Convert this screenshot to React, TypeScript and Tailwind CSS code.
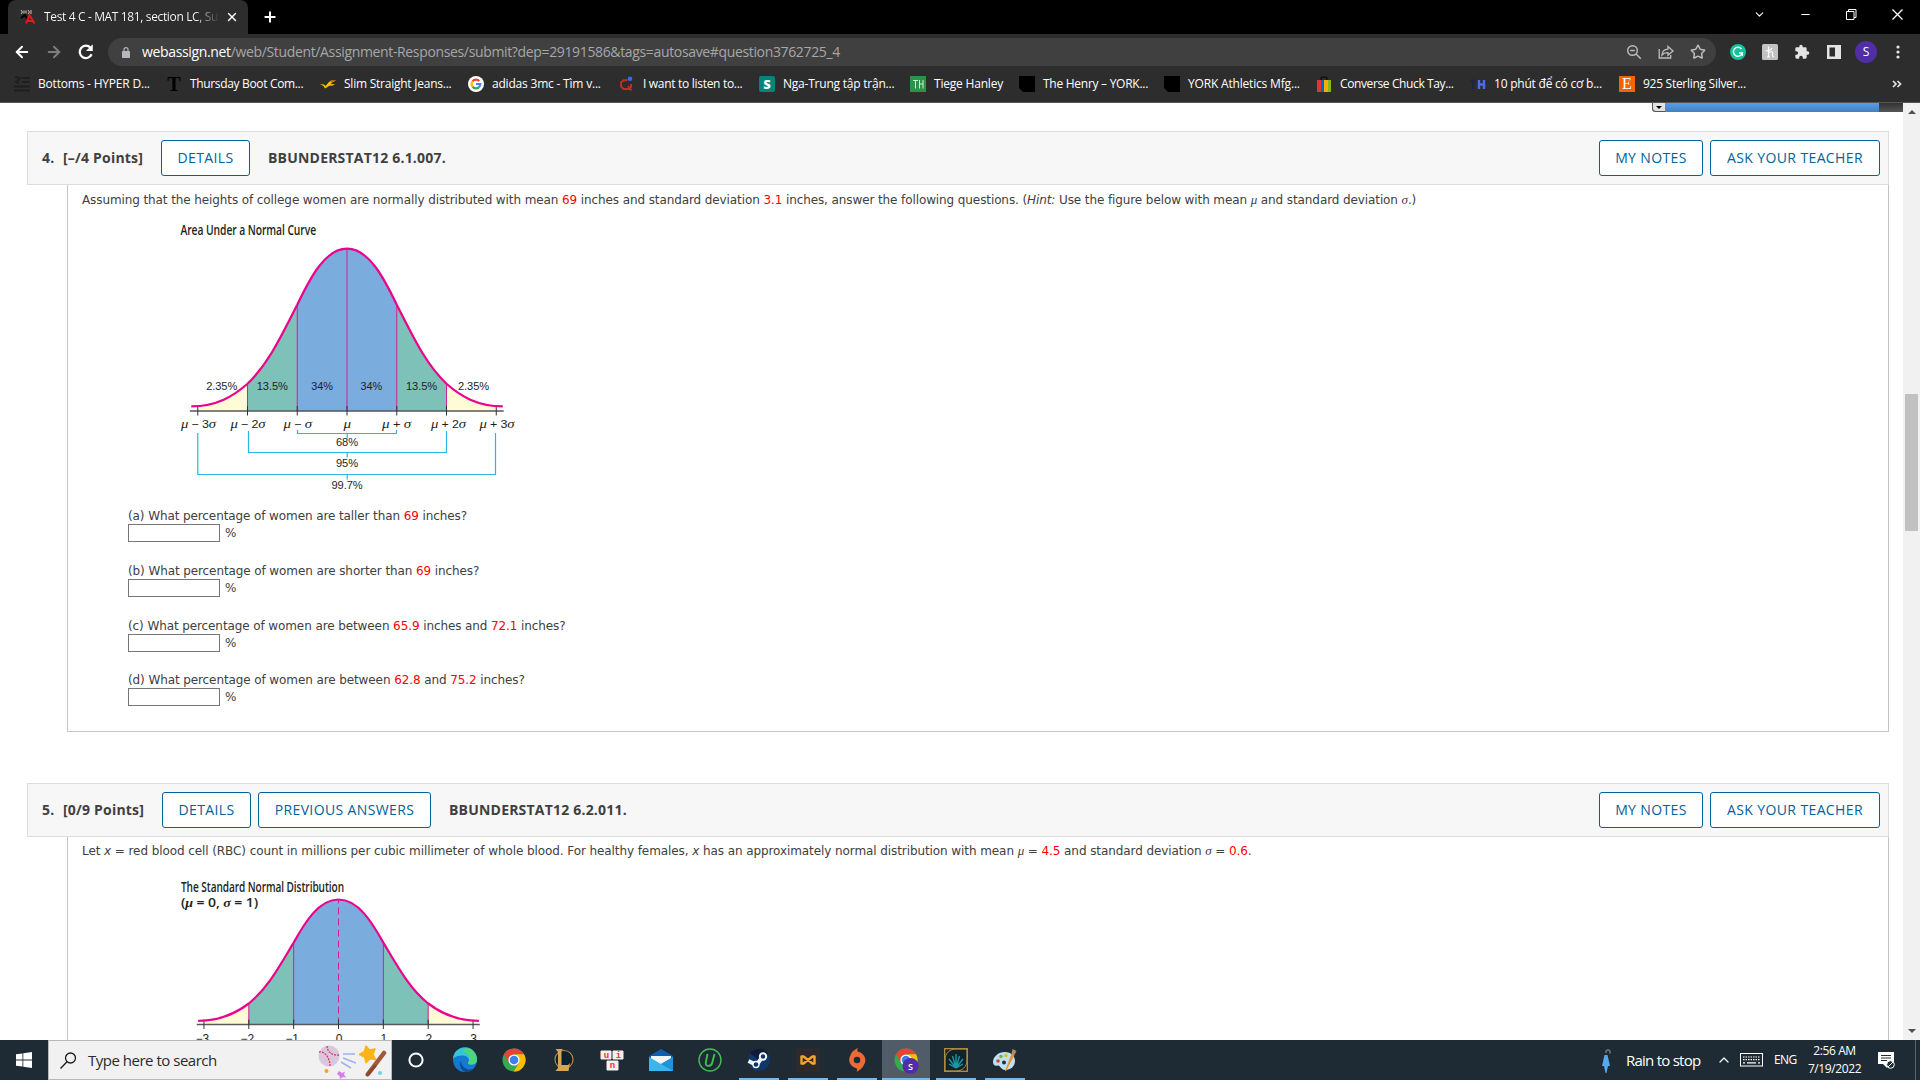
import React from 'react';
import { clsx } from 'clsx';
import { ArrowLeft, ArrowRight, ChevronDown, ChevronUp, Minus, Plus, Star, X } from 'lucide-react';

const UI = "font-['Open_Sans',sans-serif]";

function FavText({ children, className }: { children: React.ReactNode; className: string }) {
  return (
    <span className={clsx('flex h-4 w-4 shrink-0 items-center justify-center leading-none', className)}>
      {children}
    </span>
  );
}

function GoogleG() {
  return (
    <svg viewBox="0 0 16 16" className="h-4 w-4 shrink-0">
      <circle cx="8" cy="8" r="8" fill="#fff" />
      <g fill="none" strokeWidth="2.2">
        <path d="M4.6 5.3A4.3 4.3 0 0 1 11.2 5" stroke="#ea4335" />
        <path d="M4.6 10.7A4.4 4.4 0 0 1 4.6 5.3" stroke="#fbbc05" />
        <path d="M11 11.1A4.3 4.3 0 0 1 4.6 10.7" stroke="#34a853" />
        <path d="M8 8h4.3A4.3 4.3 0 0 1 11 11.1" stroke="#4285f4" />
      </g>
    </svg>
  );
}

const BOOKMARKS = [
  {
    label: 'Bottoms - HYPER D...',
    box: 'w-[152px]',
    track: 'tracking-[-0.2px]',
    icon: (
      <svg viewBox="0 0 16 16" className="h-4 w-4 shrink-0" fill="none" stroke="#1f1f1f" strokeWidth="2">
        <path d="M1 1l5 1-4 4 3 1M8 2h8M8 6h8M0 10.500h16M0 14.500h16" />
      </svg>
    ),
  },
  {
    label: 'Thursday Boot Com...',
    box: 'w-[154px]',
    track: 'tracking-[-0.34px]',
    icon: <FavText className="font-['Liberation_Serif',serif] text-[20px] font-bold text-black">T</FavText>,
  },
  {
    label: 'Slim Straight Jeans...',
    box: 'w-[148px]',
    track: 'tracking-[-0.24px]',
    icon: (
      <svg viewBox="0 0 16 16" className="h-4 w-4 shrink-0">
        <path d="M0 8l4 .5 1.500 1.500L9 6l2-1.500h5L12 6.500 11 8h4l-3 2H9L5 12.500 3.500 10z" fill="#f2c500" />
        <path d="M10 5.500l6-1.500-4 2.500zM9 9l5-.5-3 1.500z" fill="#e5531a" />
      </svg>
    ),
  },
  { label: 'adidas 3mc - Tìm v...', box: 'w-[151px]', track: 'tracking-[-0.2px]', icon: <GoogleG /> },
  {
    label: 'I want to listen to...',
    box: 'w-[140px]',
    track: 'tracking-[-0.3px]',
    icon: (
      <svg viewBox="0 0 16 16" className="h-4 w-4 shrink-0" fill="none">
        <path d="M8.500 4.200H4.500L2 6.500v4L4.500 13H10l2-2V8M9 10l3.500 4.500" stroke="#c32a2a" strokeWidth="2" />
        <circle cx="11" cy="2.800" r="2.300" fill="#2f6bff" />
      </svg>
    ),
  },
  {
    label: 'Nga-Trung tập trận...',
    box: 'w-[151px]',
    track: 'tracking-[-0.22px]',
    icon: <FavText className="rounded-[2px] bg-[#00857a] text-[13px] font-extrabold text-white">S</FavText>,
  },
  {
    label: 'Tiege Hanley',
    box: 'w-[109px]',
    track: 'tracking-[-0.2px]',
    icon: (
      <svg viewBox="0 0 16 16" className="h-4 w-4 shrink-0">
        <rect width="16" height="16" fill="#2b9348" />
        <path d="M3 4.500h5M5.500 4.500v8M9.500 4v8.500M13 4v8.500M9.500 8H13" stroke="#c8efcf" fill="none" />
      </svg>
    ),
  },
  {
    label: 'The Henry – YORK...',
    box: 'w-[145px]',
    track: 'tracking-[-0.27px]',
    icon: (
      <svg viewBox="0 0 16 16" className="h-4 w-4 shrink-0">
        <path d="M0 0h16v16H4l-4-4z" fill="#000" />
      </svg>
    ),
  },
  {
    label: 'YORK Athletics Mfg...',
    box: 'w-[152px]',
    track: 'tracking-[-0.18px]',
    icon: (
      <svg viewBox="0 0 16 16" className="h-4 w-4 shrink-0">
        <path d="M0 0h16v16H4l-4-4z" fill="#000" />
      </svg>
    ),
  },
  {
    label: 'Converse Chuck Tay...',
    box: 'w-[154px]',
    track: 'tracking-[-0.38px]',
    icon: (
      <svg viewBox="0 0 16 16" className="h-4 w-4 shrink-0">
        <path d="M5 4V2.500C5 .5 11 .5 11 2.500V4" fill="none" stroke="#111" strokeWidth="1.400" />
        <path d="M1 4h4v12H1z" fill="#e53238" />
        <path d="M5 4h3v12H5z" fill="#0064d2" />
        <path d="M8 4h4v12H8z" fill="#f5af02" />
        <path d="M12 4h3v12h-3z" fill="#86b817" />
      </svg>
    ),
  },
  {
    label: '10 phút để có cơ b...',
    box: 'w-[149px]',
    track: 'tracking-[-0.22px]',
    icon: (
      <svg viewBox="0 0 16 16" className="h-4 w-4 shrink-0" fill="none">
        <path d="M0 4.500h6M3 4.500V13" stroke="#1e2540" strokeWidth="2" />
        <path d="M9 4v9M14 4v9M9 8.500h5" stroke="#4a6cf0" strokeWidth="2.400" />
      </svg>
    ),
  },
  {
    label: '925 Sterling Silver...',
    box: 'w-[150px]',
    track: 'tracking-[-0.28px]',
    icon: <FavText className="bg-[#f56400] font-['Liberation_Serif',serif] text-[16px] text-white">E</FavText>,
  },
];

function TabStrip() {
  return (
    <div className="flex h-[34px] shrink-0 bg-black pl-2 text-white">
      <div className="relative flex w-60 items-center rounded-t-lg bg-[#2d2d2d] pl-3">
        <svg viewBox="0 0 16 16" className="mr-2 h-4 w-4 shrink-0" fill="none">
          <path d="M1 1l1.500 2L1 5M4 1.500v3M6 1.500v3M8 1l1.500 2L8 5M11 1v4" stroke="#c9c9c9" />
          <path d="M1 9l4-3 3 5" stroke="#000" strokeWidth="2" />
          <path d="M6 14.500l3.500-8.500 5 8.500M8 12h5" stroke="#e11b1b" strokeWidth="2" />
        </svg>
        <span className="w-[176px] overflow-hidden bg-gradient-to-r from-white from-85% to-transparent bg-clip-text text-xs tracking-[-0.36px] whitespace-nowrap text-transparent">
          Test 4 C - MAT 181, section LC, Su
        </span>
        <X className="ml-[5px] h-3.5 w-3.5 shrink-0" strokeWidth={2.4} />
      </div>
      <Plus className="mt-[9px] ml-3.5 h-4 w-4" strokeWidth={3} />
      <div className="ml-auto flex items-start gap-[33px] pt-2 pr-4">
        <ChevronDown className="h-[13px] w-[13px]" strokeWidth={2} />
        <Minus className="h-[13px] w-[13px]" strokeWidth={2} />
        <svg viewBox="0 0 13 13" className="h-[13px] w-[13px]" fill="none" stroke="#fff">
          <path d="M1.500 3.500h7.500v8H1.500zM3.500 3.500v-2h7.500v8H9" />
        </svg>
        <svg viewBox="0 0 13 13" className="h-[13px] w-[13px]" fill="none" stroke="#fff" strokeWidth="1.300">
          <path d="M1.500 1.500l10 10M11.500 1.500l-10 10" />
        </svg>
      </div>
    </div>
  );
}

function Toolbar() {
  return (
    <div className="flex h-8 shrink-0 items-center bg-[#2d2d2d] pt-1 pl-[13px]">
      <ArrowLeft className="h-[18px] w-[18px] text-white" strokeWidth={2.600} />
      <ArrowRight className="ml-3.5 h-[18px] w-[18px] text-[#7d7d7d]" strokeWidth={2.600} />
      <svg viewBox="0 0 16 16" className="ml-3.5 h-[18px] w-[18px] text-white" fill="none" stroke="currentColor">
        <path d="M13 10A5.500 5.500 0 1 1 12 4.200" strokeWidth="2" />
        <path d="M14 1v6H8z" fill="currentColor" stroke="none" />
      </svg>
      <div className="ml-[13px] flex h-7 w-[1608px] items-center rounded-full bg-[#404040] pl-3.5">
        <svg viewBox="0 0 10 14" className="mr-3 h-[13px] w-2" fill="none">
          <path d="M2.500 6V3.500a2.500 2.500 0 0 1 5 0V6" stroke="#b5b8bd" strokeWidth="1.500" />
          <rect y="5" width="10" height="9" rx="1" fill="#b5b8bd" />
        </svg>
        <span className="text-sm tracking-[-0.35px] whitespace-nowrap text-[#a5a7aa]">
          <span className="text-white">webassign.net</span>
          /web/Student/Assignment-Responses/submit?dep=29191586&amp;tags=autosave#question3762725_4
        </span>
        <div className="ml-auto flex items-center gap-4 pr-2.5">
          <svg viewBox="0 0 16 16" className="h-4 w-4" fill="none" stroke="#bdbdbd" strokeWidth="1.400">
            <circle cx="6.500" cy="6.500" r="4.800" />
            <path d="M10 10l4.800 4.800M4.200 6.500h4.600" />
          </svg>
          <svg viewBox="0 0 16 16" className="h-4 w-4" fill="none" stroke="#bdbdbd" strokeWidth="1.300">
            <path d="M1.200 5v9h11.500v-3" />
            <path d="M4 11c.3-4 2.500-5.800 6-5.900V2.500L15 7l-5 4.300V8.700C7.500 8.600 5.500 9.200 4 11z" />
          </svg>
          <Star className="h-4 w-4 text-[#bdbdbd]" strokeWidth={2.200} />
        </div>
      </div>
      <div className="ml-3.5 flex items-center gap-4">
        <svg viewBox="0 0 16 16" className="h-4 w-4">
          <circle cx="8" cy="8" r="8" fill="#15c39a" />
          <path d="M11.500 5A4.500 4.500 0 1 0 12.300 9H9M12.300 9v3" fill="none" stroke="#fff" strokeWidth="1.400" />
        </svg>
        <svg viewBox="0 0 16 16" className="h-4 w-4">
          <rect width="16" height="16" rx="1.500" fill="#c2c2c2" />
          <path d="M6.500 2.500v10M5 13h3M3.500 7C6 7 9 5.500 10 4M6.500 9c2-2 4-2 4 0v3l1.500 1" fill="none" stroke="#fff" strokeWidth="1.200" />
        </svg>
        <svg viewBox="0 0 24 24" className="h-[18px] w-4">
          <path d="M20.500 11H19V7a2 2 0 0 0-2-2h-4V3.500a2.500 2.500 0 0 0-5 0V5H4a2 2 0 0 0-2 2v3.800h1.500a2.700 2.700 0 0 1 0 5.400H2V20a2 2 0 0 0 2 2h3.800v-1.500a2.700 2.700 0 0 1 5.400 0V22H17a2 2 0 0 0 2-2v-4h1.500a2.500 2.500 0 0 0 0-5z" fill="#e4e4e4" />
        </svg>
        <svg viewBox="0 0 16 16" className="h-4 w-4">
          <path d="M1 1h14v14H1zM3.500 3.500v9H9v-9z" fill="#e4e4e4" fillRule="evenodd" />
        </svg>
        <span className="-mx-[3px] flex h-[22px] w-[22px] items-center justify-center rounded-full bg-[#512da8] text-xs text-white">
          S
        </span>
        <svg viewBox="0 0 16 16" className="h-4 w-4" fill="#e4e4e4">
          <circle cx="8" cy="3" r="1.600" />
          <circle cx="8" cy="8" r="1.600" />
          <circle cx="8" cy="13" r="1.600" />
        </svg>
      </div>
    </div>
  );
}

function BookmarkBar() {
  return (
    <div className="flex h-[37px] shrink-0 items-center border-b border-[#555] bg-[#2d2d2d] pl-3.5 text-xs text-white">
      {BOOKMARKS.map(b => (
        <div key={b.label} className={clsx('flex shrink-0 items-center gap-2', b.box)}>
          {b.icon}
          <span className={clsx('whitespace-nowrap', b.track)}>{b.label}</span>
        </div>
      ))}
      <svg viewBox="0 0 10 8" className="mr-[18px] ml-auto h-2 w-2.5" fill="none" stroke="#e4e4e4" strokeWidth="1.700">
        <path d="M1 1l3 3-3 3M5.500 1l3 3-3 3" />
      </svg>
    </div>
  );
}

function OutlineButton({ children, className }: { children: string; className: string }) {
  return (
    <button
      className={clsx(
        'h-9 shrink-0 rounded-[3px] border border-[#00629b] bg-white text-sm leading-none tracking-[0.38px] whitespace-nowrap text-[#00629b]',
        className
      )}
    >
      {children}
    </button>
  );
}

function QuestionHeader({ num, points, code, previous }: { num: string; points: string; code: string; previous?: boolean }) {
  return (
    <div className="flex h-[54px] shrink-0 items-center border border-[#ddd] bg-[#f7f7f7] pr-2 pl-[14px] text-sm font-bold tracking-[0.2px] whitespace-nowrap text-[#404040]">
      <span className="w-[21px]">{num}</span>
      <span className={previous ? 'w-[99px]' : 'w-[98px]'}>{points}</span>
      <OutlineButton className="w-[89px] font-normal">DETAILS</OutlineButton>
      {previous && <OutlineButton className="ml-[7px] w-[173px] font-normal">PREVIOUS ANSWERS</OutlineButton>}
      <span className="ml-[18px]">{code}</span>
      <OutlineButton className="ml-auto w-[104px] font-normal">MY NOTES</OutlineButton>
      <OutlineButton className="ml-[7px] w-[170px] font-normal">ASK YOUR TEACHER</OutlineButton>
    </div>
  );
}

function Num({ children }: { children: string }) {
  return <span className="text-[#f00]">{children}</span>;
}

function Sym({ children }: { children: string }) {
  return <i className="font-['Liberation_Serif',serif] text-[13px]">{children}</i>;
}

interface CurveProps {
  cx: number;
  sigma: number;
  axis: number;
  height: number;
  dashed?: boolean;
}

function Curve({ cx, sigma, axis, height, dashed }: CurveProps) {
  // p() maps (z, relative density) to drawing coordinates
  const p = (z: number, h: number) => `${(cx + z * sigma).toFixed(2)},${(axis - h * height).toFixed(2)}`;
  const tail = (s: number) => `C${p(s * 2.62, 0.029)} ${p(s * 2.28, 0.092)} ${p(s * 2, 0.168)}`;
  const side = (s: number) => `C${p(s * 1.58, 0.29)} ${p(s * 1.33, 0.458)} ${p(s, 0.655)}`;
  const whole = (s: number) =>
    `M${p(s * 3.13, 0.029)} ${tail(s)} ${side(s)} C${p(s * 0.744, 0.819)} ${p(s * 0.44, 1)} ${p(0, 1)}`;
  const top = (s: number) => `M${p(s, 0)} L${p(s, 0.655)} C${p(s * 0.744, 0.819)} ${p(s * 0.44, 1)} ${p(0, 1)} L${p(0, 0)}Z`;
  return (
    <g fill="none">
      {[-1, 1].map(s => (
        <g key={s}>
          <path d={`M${p(s * 3, 0)} L${p(s * 3, 0.029)} ${tail(s)} L${p(s * 2, 0)}Z`} fill="#fffbd6" />
          <path d={`M${p(s * 2, 0)} L${p(s * 2, 0.168)} ${side(s)} L${p(s, 0)}Z`} fill="#7dc1b9" />
          <path d={top(s)} fill="#7aacde" stroke="#7aacde" strokeWidth="0.5" />
        </g>
      ))}
      <path d={`M${p(-3.16, 0)} L${p(3.15, 0)}`} stroke="#58585a" strokeWidth="1.3" />
      {[-2, -1, 1, 2].map(z => (
        <path key={z} d={`M${p(z, 0)} L${p(z, Math.abs(z) === 1 ? 0.655 : 0.168)}`} stroke="#d0218f" />
      ))}
      <path d={`M${p(0, 0)} L${p(0, 1)}`} stroke="#d0218f" strokeDasharray={dashed ? '7 4' : undefined} />
      {[-3, -2, -1, 0, 1, 2, 3].map(z => (
        <path key={z} d={`M${p(z, 0)}m0-5v9.500`} stroke="#333" />
      ))}
      {[-1, 1].map(s => (
        <path key={s} d={whole(s)} stroke="#ec008c" strokeWidth="2.2" />
      ))}
    </g>
  );
}

const AREAS = [
  ['2.35%', 221.700, 31],
  ['13.5%', 272.300, 31],
  ['34%', 322, 21.500],
  ['34%', 371.300, 21.500],
  ['13.5%', 421.500, 31],
  ['2.35%', 473.500, 31],
] as const;

const AXIS_LABELS = [
  ['μ', ' − 3', 'σ', 181, 35],
  ['μ', ' − 2', 'σ', 230.500, 35],
  ['μ', ' − ', 'σ', 283.500, 28.500],
  ['μ', '', '', 343.500, 7.500],
  ['μ', ' + ', 'σ', 382, 29],
  ['μ', ' + 2', 'σ', 431, 35],
  ['μ', ' + 3', 'σ', 479.500, 35],
] as const;

function AreaChart() {
  return (
    <svg
      viewBox="180 218 340 276"
      className="h-[276px] w-[340px] font-['Liberation_Sans',sans-serif] text-[11px]"
      fill="#231f20"
    >
      <text x="180.5" y="234.500" textLength="135.500" lengthAdjust="spacingAndGlyphs" className="font-['Open_Sans',sans-serif] text-[13.500px] font-semibold">
        Area Under a Normal Curve
      </text>
      <Curve cx={347} sigma={49.750} axis={411} height={162.300} />
      {AREAS.map(([label, x, w]) => (
        <text key={x} x={x} y="390" textAnchor="middle" textLength={w} lengthAdjust="spacingAndGlyphs">
          {label}
        </text>
      ))}
      {AXIS_LABELS.map(([a, b, c, x, w]) => (
        <text key={x} x={x} y="428" textLength={w} lengthAdjust="spacingAndGlyphs">
          <tspan className="font-['Liberation_Serif',serif] text-[13px] italic">{a}</tspan>
          {b}
          <tspan className="font-['Liberation_Serif',serif] text-[13px] italic">{c}</tspan>
        </text>
      ))}
      <g fill="none" stroke="#29b5e8" strokeWidth="1.200">
        <path d="M297.500 430v3.500h99V430M347.200 433.500v5" />
        <path d="M248.500 431v21.500h198V431M347.200 452.500v5" />
        <path d="M197.800 433v41.500h297.700V433M347.200 474.500v5" />
      </g>
      <text x="347" y="446" textAnchor="middle" textLength="22" lengthAdjust="spacingAndGlyphs">68%</text>
      <text x="347" y="467" textAnchor="middle" textLength="22" lengthAdjust="spacingAndGlyphs">95%</text>
      <text x="347" y="488.500" textAnchor="middle" textLength="31" lengthAdjust="spacingAndGlyphs">99.7%</text>
    </svg>
  );
}

function StandardChart() {
  return (
    <svg viewBox="180 878 310 170" className="h-[170px] w-[310px] font-['Liberation_Sans',sans-serif] text-[12px]" fill="#231f20">
      <text x="181" y="891.500" textLength="163" lengthAdjust="spacingAndGlyphs" className="font-['Open_Sans',sans-serif] text-[13.500px] font-semibold">
        The Standard Normal Distribution
      </text>
      <text x="181" y="907" textLength="77" lengthAdjust="spacingAndGlyphs" className="font-['Open_Sans',sans-serif] text-[13px] font-semibold">
        (<tspan className="font-['Liberation_Serif',serif] italic">μ</tspan> = 0,{' '}
        <tspan className="font-['Liberation_Serif',serif] italic">σ</tspan> = 1)
      </text>
      <Curve cx={338.500} sigma={44.850} axis={1024.500} height={125} dashed />
      {[-3, -2, -1, 0, 1, 2, 3].map(z => (
        <text key={z} x={338.500 + z * 44.850 + (z < 0 ? -1.500 : 0.500)} y="1043" textAnchor="middle">
          {z < 0 ? `−${-z}` : z}
        </text>
      ))}
    </svg>
  );
}

function Part({ children }: { children: React.ReactNode }) {
  return (
    <div className="mb-[18.800px] flex flex-col">
      <p className="h-[18px] leading-5 whitespace-nowrap">{children}</p>
      <div className="flex h-[18px] items-center">
        <input className="h-[18px] w-[92px] border border-[#767676] bg-white" />
        <span className="ml-[5px] leading-[18px]">%</span>
      </div>
    </div>
  );
}

const BODY = "ml-10 flex flex-col border-x border-b border-[#c4c7ca] bg-white pl-[13px] font-['DejaVu_Sans',sans-serif] text-xs tracking-[-0.1px] text-[#404040]";

function Page() {
  return (
    <div className="flex min-h-0 flex-1 bg-white">
      <div className="flex w-[1903px] flex-col overflow-hidden">
        <div className="ml-auto flex h-[9px] w-[251px] shrink-0 rounded-bl bg-gradient-to-b from-[#333] to-[#555]">
          <span className="flex w-[13px] justify-center rounded-bl border-b border-l border-[#555] bg-[#e2e2e2]">
            <span className="mt-[3px] h-0 w-0 border-x-[3px] border-t-[3px] border-x-transparent border-t-black" />
          </span>
          <span className="w-[214px] bg-gradient-to-b from-[#539ff0] to-[#467fb8]" />
        </div>
        <div className="mt-[19px] ml-[27px] flex w-[1862px] flex-col">
          <QuestionHeader num="4." points="[–/4 Points]" code="BBUNDERSTAT12 6.1.007." />
          <div className={clsx(BODY, 'h-[547px] shrink-0')}>
            <p className="mt-1.5 h-[17px] pl-px leading-[18px] whitespace-nowrap">
              Assuming that the heights of college women are normally distributed with mean <Num>69</Num> inches and
              standard deviation <Num>3.1</Num> inches, answer the following questions. (<i>Hint:</i> Use the figure below
              with mean <Sym>μ</Sym> and standard deviation <Sym>σ</Sym>.)
            </p>
            <div className="mt-2.5 ml-[99px] h-[276px]">
              <AreaChart />
            </div>
            <div className="mt-3 ml-[47px]">
              <Part>
                (a) What percentage of women are taller than <Num>69</Num> inches?
              </Part>
              <Part>
                (b) What percentage of women are shorter than <Num>69</Num> inches?
              </Part>
              <Part>
                (c) What percentage of women are between <Num>65.9</Num> inches and <Num>72.1</Num> inches?
              </Part>
              <Part>
                (d) What percentage of women are between <Num>62.8</Num> and <Num>75.2</Num> inches?
              </Part>
            </div>
          </div>
          <div className="h-[51px] shrink-0" />
          <QuestionHeader num="5." points="[0/9 Points]" code="BBUNDERSTAT12 6.2.011." previous />
          <div className={clsx(BODY, 'h-[260px] shrink-0')}>
            <p className="mt-[5px] h-[18px] pl-px leading-[18px] tracking-[-0.085px] whitespace-nowrap">
              Let <i>x</i> = red blood cell (RBC) count in millions per cubic millimeter of whole blood. For healthy
              females, <i>x</i> has an approximately normal distribution with mean <Sym>μ</Sym> = <Num>4.5</Num> and
              standard deviation <Sym>σ</Sym> = <Num>0.6</Num>.
            </p>
            <div className="mt-[18px] ml-[99px]">
              <StandardChart />
            </div>
          </div>
        </div>
      </div>
      <div className="flex w-[17px] flex-col items-center bg-[#f1f1f1]">
        <span className="mt-[7px] h-0 w-0 border-x-[4px] border-b-[4px] border-x-transparent border-b-[#505050]" />
        <span className="mt-[280px] h-[137px] w-[13px] bg-[#c1c1c1]" />
        <span className="mt-auto mb-[7px] h-0 w-0 border-x-[4px] border-t-[4px] border-x-transparent border-t-[#505050]" />
      </div>
    </div>
  );
}

function Chrome() {
  return (
    <>
      <circle cx="12" cy="12" r="11.500" fill="#34a853" />
      <path d="M2 6.300A11.500 11.500 0 0 1 22 6.300H12L7 15z" fill="#ea4335" />
      <path d="M22 6.300A11.500 11.500 0 0 1 11.500 23.500L17 15 14 6.300z" fill="#fbbc05" />
      <circle cx="12" cy="12" r="5.600" fill="#fff" />
      <circle cx="12" cy="12" r="4.300" fill="#3b7ff0" />
    </>
  );
}

const APPS: { id: string; open?: boolean; active?: boolean; art: React.ReactNode }[] = [
  { id: 'cortana', art: <circle cx="12" cy="12" r="6.600" fill="none" stroke="#fff" strokeWidth="2" /> },
  {
    id: 'edge',
    art: (
      <>
        <circle cx="12" cy="12" r="12" fill="#1479d0" />
        <path d="M0 11A12 12 0 0 1 24 11.500c0 4-3 5-6 5s-3.500-1.500-2.500-2.500C17 12 15 7.500 10 7.500 5 7.500 1 9 0 11z" fill="#35c4d8" />
        <path d="M13 0A12 12 0 0 1 24 11.500c0 4-3 5-6 5s-3.500-1.500-2.500-2.500C17.500 11 16 5 10 3z" fill="#4fd67a" />
        <path d="M8 13c0 6 5 8.500 9 8.500 2.500 0 4-.8 5-1.500A12 12 0 0 1 12 24C8 22 5.500 17 8 13z" fill="#0c4a92" />
      </>
    ),
  },
  { id: 'chrome', art: <Chrome /> },
  {
    id: 'league',
    art: (
      <>
        <circle cx="13" cy="11.500" r="9" fill="#0b2233" stroke="#b08a45" strokeWidth="1.200" />
        <path d="M4.500 1h7.500l-1.500 2v14H17l2-2-1.500 8H4.500L7 20V4z" fill="#d9a650" />
      </>
    ),
  },
  {
    id: 'unikey',
    art: (
      <g className="font-['Liberation_Mono',monospace] text-[9px] font-bold" textAnchor="middle" fill="#e33">
        <path d="M1 3h10v8H1zM13 3h10v8H13zM7 13h11v9H7z" fill="#f4f0f0" stroke="#f4f0f0" />
        <text x="6.500" y="9.500">u</text>
        <text x="18.500" y="9.500">i</text>
        <text x="12.500" y="19.500">n</text>
      </g>
    ),
  },
  {
    id: 'mail',
    art: (
      <>
        <path d="M0 8L12 1l12 7v4H0z" fill="#0f5fb0" />
        <path d="M2 8h20v6l-10 4L2 13z" fill="#f3f6f8" />
        <path d="M0 9l12 7 12-7v14H0z" fill="#39b6ee" />
        <path d="M24 9v14L12 16z" fill="#1c93dc" />
      </>
    ),
  },
  {
    id: 'uninstaller',
    art: (
      <g fill="none" stroke="#3fbf52">
        <circle cx="12" cy="12" r="11" strokeWidth="1.400" />
        <path d="M9.500 6l-1.700 8.500c-.8 4.500 5.700 4.500 6.500 0L16.500 6" strokeWidth="1.900" />
      </g>
    ),
  },
  {
    id: 'steam',
    open: true,
    art: (
      <>
        <circle cx="12" cy="12" r="11" fill="#11366a" />
        <path d="M3 5.500A11 11 0 0 1 21 5.500L12 12z" fill="#111c3a" />
        <path d="M1.500 13l8 4 6-8" stroke="#f2f5f8" strokeWidth="4" fill="none" />
        <circle cx="9" cy="16.500" r="3" fill="#11366a" stroke="#fff" strokeWidth="1.300" />
        <circle cx="16" cy="8.500" r="3.200" fill="#11366a" stroke="#fff" strokeWidth="1.900" />
      </>
    ),
  },
  {
    id: 'infinity',
    open: true,
    art: (
      <>
        <rect width="24" height="24" rx="2" fill="#2c2a2d" />
        <path d="M5.500 8.500h2L12 12l4.500-3.500h2v7h-2L12 12l-4.500 3.500h-2z" fill="none" stroke="#f5a52a" strokeWidth="2.400" strokeLinejoin="round" />
      </>
    ),
  },
  {
    id: 'origin',
    open: true,
    art: (
      <path
        d="M13 0c-1 2-1 3 0 3.800a8.500 8.500 0 0 1 6 13C17.500 20.500 14 22.500 11.500 24c1-2 .8-3 0-3.800a8.500 8.500 0 0 1-6-13C6.500 3.500 10 1.500 13 0zM12 8.700a3.300 3.300 0 1 0 0 6.600 3.300 3.300 0 0 0 0-6.600z"
        fill="#ec6a35"
        fillRule="evenodd"
      />
    ),
  },
  {
    id: 'chrome-profile',
    open: true,
    active: true,
    art: (
      <>
        <Chrome />
        <circle cx="16.500" cy="18" r="8" fill="#512da8" />
        <text x="16.500" y="21.500" textAnchor="middle" fill="#fff" className="font-['Open_Sans',sans-serif] text-[9px] font-semibold">
          S
        </text>
      </>
    ),
  },
  {
    id: 'garden',
    open: true,
    art: (
      <>
        <rect x="0.700" y="0.700" width="22.600" height="22.600" fill="#10222c" stroke="#b08a3c" strokeWidth="1.400" />
        <path d="M1 12C1 5 6 1 12 1h11v11c0 7-5 11-11 11H1z" fill="none" stroke="#b08a3c" />
        <path d="M12 20V6M12 20L8.500 8M12 20l3.500-12M12 20L5 11M12 20l7-9M12 20l-7-4M12 20l7-4" stroke="#1d98a3" strokeWidth="1.400" />
      </>
    ),
  },
  {
    id: 'paint',
    open: true,
    art: (
      <>
        <path d="M12 4C5 4 0 9 0 14c0 4 3 4 5 3.500S8 22 12 22c6 0 10-4 10-9s-4-9-10-9z" fill="#bfe0f0" />
        <circle cx="5" cy="13" r="1.800" fill="#e23b3b" />
        <circle cx="8" cy="8.500" r="1.800" fill="#6cb83c" />
        <circle cx="13" cy="7.500" r="1.800" fill="#f0b428" />
        <circle cx="11" cy="14.500" r="2" fill="#223139" />
        <path d="M12.500 23L19 6l2 1z" fill="#e8912c" stroke="#e8912c" />
        <path d="M18.500 6l1-5 4 2-2 4z" fill="#b58a5e" />
      </>
    ),
  },
];

function TaskbarApp({ open, active, art }: { open?: boolean; active?: boolean; art: React.ReactNode }) {
  return (
    <div className="flex h-10 w-[49.100px] shrink-0 flex-col items-center">
      <div className={clsx('flex h-[38px] items-center justify-center pt-0.5', active ? 'w-12 bg-[#505d68]' : 'w-10')}>
        <svg viewBox="0 0 24 24" className="h-6 w-6 overflow-visible">
          {art}
        </svg>
      </div>
      <div className={clsx('h-0.5', active ? 'w-12' : 'w-10', open && 'bg-[#76b9ed]')} />
    </div>
  );
}

function Taskbar() {
  return (
    <div className="flex h-10 shrink-0 items-center bg-[#1f2b34] text-white">
      <div className="flex w-12 justify-center">
        <svg viewBox="0 0 16 16" className="h-4 w-4" fill="#fff">
          <path d="M0 2.300l6.500-.9v6.200H0zM7.300 1.300L16 0v7.600H7.300zM0 8.400h6.500v6.200L0 13.700zM7.300 8.400H16V16l-8.700-1.300z" />
        </svg>
      </div>
      <div className="-mr-px flex h-10 w-[344px] items-center border border-[#b9b9b9] bg-[#f1f1f1] pl-[11px] text-[#2b2b2b]">
        <svg viewBox="0 0 17 17" className="h-[17px] w-[17px]" fill="none" stroke="#1b1b1b" strokeWidth="1.300">
          <circle cx="10.500" cy="6" r="5" />
          <path d="M7 9.700L.5 16.500" />
        </svg>
        <span className="ml-[11px] text-[15px] tracking-[-0.49px] whitespace-nowrap">Type here to search</span>
        <svg viewBox="0 0 70 38" className="mr-1 ml-auto h-[38px] w-[70px]">
          <circle cx="12" cy="15" r="10.500" fill="#d9c8dc" />
          <path d="M2 11c5-1 11 5 11 14M10 5c0 6 6 10 12 9" fill="none" stroke="#d83a6b" strokeWidth="1.300" strokeDasharray="2 1" />
          <path d="M26 13h12M26 17l13 5M24 21l10 6" stroke="#9fb0f2" strokeWidth="1.600" />
          <path d="M49 5l3.500 4 5.500-1-2 5.500 2.500 5-5.500-.7-4 4-1.300-5.800-5.200-2.500 5-3z" fill="#fbb416" stroke="#fbb416" strokeWidth="1.500" strokeLinejoin="round" />
          <path d="M67 12L51 33" stroke="#a05a3c" strokeWidth="4.500" strokeLinecap="round" />
          <path d="M58 25l-8 9" stroke="#8a4a30" strokeWidth="3" strokeLinecap="round" />
          <circle cx="9.500" cy="30" r="2" fill="#f9a51a" />
          <path d="M22 30l3 2 3-1.500-1 3 2 3-3-.5-3 2-.5-3-2.500-2z" fill="#d97bf0" />
          <circle cx="63" cy="32" r="2" fill="#6fd3e6" />
        </svg>
      </div>
      <div className="flex">
        {APPS.map(a => (
          <TaskbarApp key={a.id} open={a.open} active={a.active} art={a.art} />
        ))}
      </div>
      <div className="ml-auto flex h-10 items-center">
        <svg viewBox="0 0 10 24" className="mt-0.5 h-6 w-2.5">
          <path d="M5 4V3a2 2 0 0 1 4 0v1.500" fill="none" stroke="#777" strokeWidth="1.500" />
          <path d="M3.500 6h3L9 17H7L5.500 24h-1L3 17H1z" fill="#55a9ee" />
        </svg>
        <span className="ml-[15px] w-[75px] pt-px text-[15px] tracking-[-0.76px] whitespace-nowrap">Rain to stop</span>
        <ChevronUp className="ml-[15px] h-4 w-4" strokeWidth={1.800} />
        <svg viewBox="0 0 23 14" className="ml-2 h-3.5 w-[23px]" fill="none" stroke="#fff">
          <rect x="0.500" y="0.500" width="22" height="12.500" />
          <path d="M3 4h17M3 6.700h17" strokeDasharray="1.500 1" strokeWidth="1.200" />
          <path d="M3 9.800h2M7 9.800h9M18 9.800h2" strokeWidth="1.200" />
        </svg>
        <span className="ml-[11px] w-6 text-xs tracking-[-0.6px]">ENG</span>
        <div className="ml-2 flex w-[57px] flex-col items-center text-xs leading-[18px] tracking-[-0.4px] whitespace-nowrap">
          <span>2:56 AM</span>
          <span>7/19/2022</span>
        </div>
        <svg viewBox="0 0 17 17" className="ml-[15px] h-[17px] w-[17px]">
          <path d="M0 0h16v12H9v4l-4-4H0z" fill="#fff" />
          <path d="M3 3.500h10M3 6h10M3 8.500h6" stroke="#1f2b34" />
          <circle cx="12.500" cy="12.500" r="3.800" fill="#1f2b34" stroke="#fff" />
          <path d="M10 15l5-5" stroke="#fff" />
        </svg>
        <span className="ml-5 h-10 w-px bg-[#5b656c]" />
        <span className="w-1" />
      </div>
    </div>
  );
}

export default function App() {
  return (
    <div className={clsx('flex h-[1080px] w-[1920px] flex-col overflow-hidden', UI)}>
      <TabStrip />
      <Toolbar />
      <BookmarkBar />
      <Page />
      <Taskbar />
    </div>
  );
}
